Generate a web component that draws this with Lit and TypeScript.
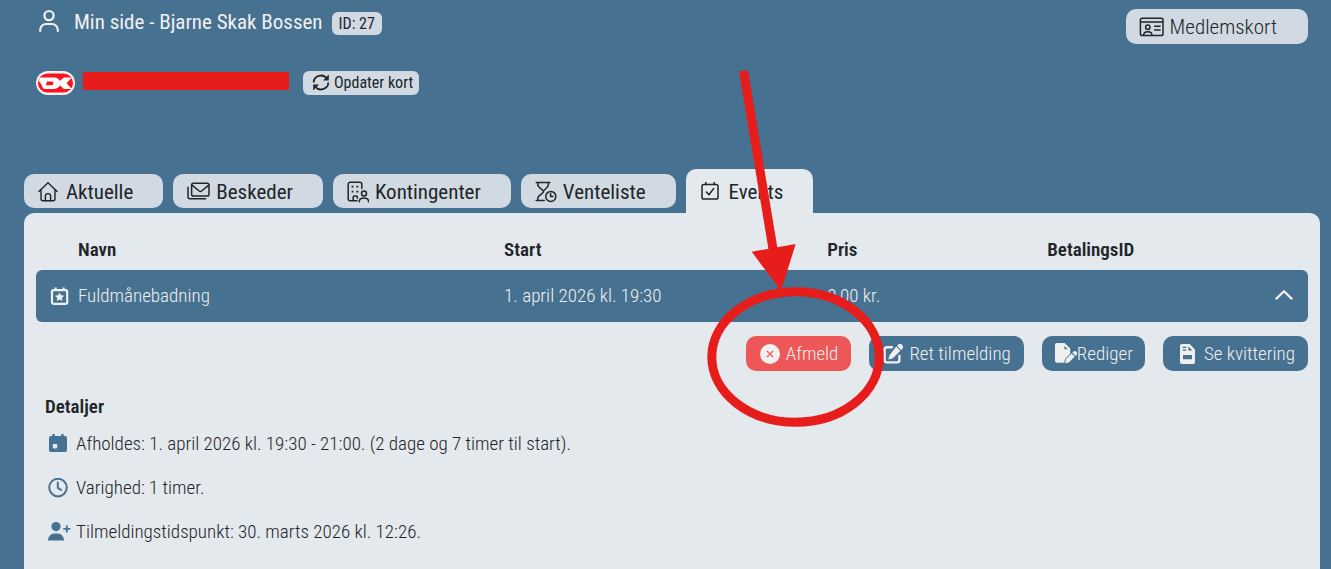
import { LitElement, html, css, svg, SVGTemplateResult } from "lit";
import { customElement, property, state } from "lit/decorators.js";

type Glyph = { w: number; h: number; body: SVGTemplateResult };

const glyphs: Record<string, Glyph> = {
  user: {
    w: 22, h: 26,
    body: svg`<g fill="none" stroke="currentColor" stroke-width="2.200" stroke-linecap="round"><circle cx="11" cy="6.600" r="4.600"/><path d="M2.200 22v-1a6 6 0 0 1 6-6h5.600a6 6 0 0 1 6 6v1"/></g>`,
  },
  card: {
    w: 26, h: 20,
    body: svg`<g fill="none" stroke="currentColor" stroke-width="1.500"><rect x="1.400" y="1.200" width="22.600" height="17.400" rx="1.800"/><path d="M1.400 5H24M15.100 9.200h6.500M15.100 13h6.500"/><circle cx="8.800" cy="10.200" r="2.200"/><path d="M4.600 18.400c0-2.400 1.600-3.600 4.200-3.600s4.200 1.200 4.200 3.600"/></g>`,
  },
  refresh: {
    w: 18, h: 18,
    body: svg`<g fill="none" stroke="currentColor" stroke-width="1.800"><path d="M1.700 8.400A7.200 6.800 0 0 1 15 4.800M16.300 8.600A7.200 6.800 0 0 1 3 12.200"/></g><path d="M16.800.4v6h-5.800l2-2 1.600-.8.800-1.800zM1.200 16.600v-6H7l-2 2-1.600.8-.8 1.800z" fill="currentColor"/>`,
  },
  home: {
    w: 22, h: 20,
    body: svg`<g fill="none" stroke="currentColor" stroke-width="1.400" stroke-linecap="round" stroke-linejoin="round"><path d="M.9 9.400 10 .8l9.100 8.600"/><path d="M3 7.800v9c0 1.200.8 2 2 2h10c1.200 0 2-.8 2-2v-9"/><path d="M7.400 18.800v-4.600a2.600 2.600 0 0 1 5.200 0v4.600"/></g>`,
  },
  mail: {
    w: 23, h: 20,
    body: svg`<g fill="none" stroke="currentColor" stroke-width="1.500" stroke-linecap="round" stroke-linejoin="round"><rect x="4.600" y="1.200" width="17.400" height="12.800" rx="1.800"/><path d="m5 3.200 7.200 5.800c.8.600 1.600.6 2.400 0l7.200-5.800M1 5.200v9.600c0 1.200.8 2 2 2h15.600"/></g>`,
  },
  building: {
    w: 22, h: 22,
    body: svg`<g fill="none" stroke="currentColor" stroke-width="1.500" stroke-linecap="round" stroke-linejoin="round"><path d="M10 19.800H3.200a2 2 0 0 1-2-2V3.200a2 2 0 0 1 2-2h9.600a2 2 0 0 1 2 2v4.400"/><path d="M6.200 19.600v-3.400c0-.8.500-1.200 1.200-1.200h1.800c.7 0 1.200.4 1.200 1.200v1"/><circle cx="17" cy="12.600" r="2.500"/><path d="M12.200 20.800c0-2.600 1.800-3.800 4.800-3.800s4.600 1.200 4.600 3.800"/></g><path d="M4.600 4.800h1.900v1.700H4.600zM9.400 4.800h1.900v1.700H9.400zM4.600 9.700h1.900v1.700H4.600zM9.400 9.700h1.900v1.700H9.400z" fill="currentColor"/>`,
  },
  hourglass: {
    w: 22, h: 22,
    body: svg`<g fill="none" stroke="currentColor" stroke-width="1.500" stroke-linecap="round" stroke-linejoin="round"><path d="M1.200 1.400h13.600M1.200 19.600h8M2.800 1.400v2.200c0 3.800 5.800 4.800 5.800 7s-5.800 3.200-5.800 7v2M13.400 1.400v2.200c0 3-3.800 4.500-4.800 6.400"/><circle cx="15.800" cy="15.400" r="5"/><path d="M15.600 12.600v3H18"/></g>`,
  },
  calendarCheck: {
    w: 20, h: 20,
    body: svg`<g fill="none" stroke="currentColor" stroke-width="1.500" stroke-linecap="round" stroke-linejoin="round"><rect x="2" y="2.400" width="16" height="14.600" rx="1.800"/><path d="M5.800.6v2M14.200.6v2M6.400 10l2.600 2.800 4.600-6.200"/></g>`,
  },
  calendarStar: {
    w: 19, h: 19,
    body: svg`<g fill="none" stroke="currentColor" stroke-width="2.200"><rect x="2" y="3.200" width="15.200" height="13.600" rx="1.600"/><path d="M5.600.4v3M13.600.4v3"/></g><path d="m9.600 5.400 1.400 2.900 3.200.4-2.300 2.200.6 3.200-2.900-1.600-2.900 1.600.6-3.200L5 8.700l3.200-.4z" fill="currentColor"/>`,
  },
  chevron: {
    w: 18, h: 12,
    body: svg`<path d="M1.400 8.600 9 1.200l7.600 7.400" fill="none" stroke="currentColor" stroke-width="2.200" stroke-linecap="round" stroke-linejoin="round"/>`,
  },
  cancel: {
    w: 20, h: 20,
    body: svg`<circle cx="10" cy="10" r="10" fill="currentColor"/><path d="m7 7 6 6m0-6-6 6" stroke="#ed5758" stroke-width="1.200"/>`,
  },
  edit: {
    w: 20, h: 20,
    body: svg`<path d="M9 3.200H4A2.400 2.400 0 0 0 1.600 5.600V16A2.400 2.400 0 0 0 4 18.400h10a2.400 2.400 0 0 0 2.400-2.400v-4" fill="none" stroke="currentColor" stroke-width="2.400" stroke-linecap="round"/><path d="m13.200 2.600 4.200 4.200-6.800 6.800c-.4.400-.8.600-1.300.8l-4 1.200 1.200-4c.2-.5.400-.9.800-1.300zM14 1.800l.9-.9a2.600 2.600 0 0 1 4.200 4.200l-.9.900z" fill="currentColor"/>`,
  },
  filePen: {
    w: 22, h: 21,
    body: svg`<path d="M2 0h7.600l5.600 5.600v5.200l-5 5-1 4H2a2 2 0 0 1-2-2V2a2 2 0 0 1 2-2z" fill="currentColor"/><path d="M9.400 3v3.200h3.400z" fill="#477191"/><path d="m16.600 10.400 3.200 3.200-5.700 5.700-4 1.300.9-4.500zM17.400 9.600l.9-.8a2.200 2.200 0 0 1 3.100 3.200l-.8.900z" fill="currentColor"/>`,
  },
  receipt: {
    w: 20, h: 20,
    body: svg`<path d="M4 0h7.600L17 5.400V18a2 2 0 0 1-2 2H4a2 2 0 0 1-2-2V2a2 2 0 0 1 2-2z" fill="currentColor"/><path d="M4.600 2.800h3.600v1.200H4.600zM4.600 5.600h3.600v1.200H4.600zM10.400 2.600v4h4zM5 11h9v4.200H5z" fill="#477191"/>`,
  },
  calendarDay: {
    w: 20, h: 20,
    body: svg`<path d="M4.400 0h2.400v2h6.400V0h2.400v2H17a2 2 0 0 1 2 2v12a2 2 0 0 1-2 2H3a2 2 0 0 1-2-2V4a2 2 0 0 1 2-2h1.400z" fill="currentColor"/><rect x="4.800" y="10" width="4.400" height="4.400" rx=".8" fill="#e4e9ed"/>`,
  },
  clock: {
    w: 20, h: 20,
    body: svg`<g fill="none" stroke="currentColor" stroke-width="2" stroke-linecap="round" stroke-linejoin="round"><circle cx="10" cy="9.600" r="8.800"/><path d="M9.800 4.600v5.200l3.400 2.200"/></g>`,
  },
  userPlus: {
    w: 23, h: 20,
    body: svg`<circle cx="8" cy="4.600" r="4.600" fill="currentColor"/><path d="M0 18.600c0-4.200 3-7 6.400-7h3.200c3.400 0 6.400 2.800 6.400 7z" fill="currentColor"/><path d="M18.800 3.400v7M15.300 6.900h7" stroke="currentColor" stroke-width="1.800"/>`,
  },
};

@customElement("ui-icon")
export class UiIcon extends LitElement {
  @property() name = "user";
  static styles = css`
    :host { display: inline-flex; flex: none; }
    svg { display: block; }
  `;
  render() {
    const g = glyphs[this.name];
    return html`<svg width=${g.w} height=${g.h} viewBox="0 0 ${g.w} ${g.h}" aria-hidden="true">${g.body}</svg>`;
  }
}

@customElement("app-root")
export class AppRoot extends LitElement {
  @state() private active = "Events";

  private tabs = [
    { label: "Aktuelle", icon: "home" },
    { label: "Beskeder", icon: "mail" },
    { label: "Kontingenter", icon: "building" },
    { label: "Venteliste", icon: "hourglass" },
    { label: "Events", icon: "calendarCheck" },
  ];

  private actions = [
    { label: "Afmeld", icon: "cancel", kind: "danger" },
    { label: "Ret tilmelding", icon: "edit", kind: "" },
    { label: "Rediger", icon: "filePen", kind: "tight" },
    { label: "Se kvittering", icon: "receipt", kind: "" },
  ];

  private details = [
    { icon: "calendarDay", text: "Afholdes: 1. april 2026 kl. 19:30 - 21:00. (2 dage og 7 timer til start)." },
    { icon: "clock", text: "Varighed: 1 timer." },
    { icon: "userPlus", text: "Tilmeldingstidspunkt: 30. marts 2026 kl. 12:26." },
  ];

  static styles = css`
    :host {
      display: flex;
      flex-direction: column;
      position: relative;
      box-sizing: border-box;
      min-height: 100vh;
      overflow: hidden;
      background: #477191;
      color: #212529;
      font: 300 19px/24px "Roboto Condensed", "Liberation Sans Narrow", Roboto, sans-serif;
    }
    button { font: inherit; color: inherit; border: 0; margin: 0; cursor: pointer; display: flex; align-items: center; }
    .top { display: flex; justify-content: space-between; align-items: flex-start; padding: 9px 23px 0 36px; }
    .who { display: flex; flex-direction: column; gap: 36px; }
    .line { display: flex; align-items: center; }
    .title { color: #f0f0f0; height: 26px; }
    h1 { font-size: 21px; line-height: 26px; font-weight: 400; margin: 0 9px 0 14px; }
    .title ui-icon { margin-left: 2px; }
    .badge { background: #d1dae2; color: #212529; border-radius: 6px; font-size: 16px; line-height: 23px; padding: 0 7px; font-weight: 400; align-self: flex-end; }
    .redacted { width: 206px; height: 18px; background: #e71d1c; margin: 1px 14px 0 8px; align-self: flex-start; }
    .update { background: #d1dae2; border-radius: 6px; height: 24px; padding: 0 6px 0 9px; gap: 4px; font-size: 16px; font-weight: 400; }
    .member { background: #d1dae2; border-radius: 10px; height: 35px; padding: 0 31px 0 13px; gap: 5px; font-size: 21px; }
    .tabs { display: flex; align-items: flex-end; gap: 10px; padding: 0 24px; margin-top: 74px; }
    .tab { background: #d1dae2; border-radius: 10px; height: 34px; padding: 1px 30px 0 14px; margin-bottom: 5px; gap: 6px; font-size: 21px; font-weight: 400; }
    .tab.active { background: #e4e9ed; border-radius: 10px 10px 0 0; height: 44px; margin-bottom: 0; gap: 9px; }
    .panel { flex: 1; background: #e4e9ed; border-radius: 10px 10px 0 0; margin: 0 11px 0 24px; padding: 16px 12px; }
    table { width: 100%; border-collapse: separate; border-spacing: 0; table-layout: fixed; }
    th, td { text-align: left; padding: 0; }
    th { font-weight: 600; height: 41px; vertical-align: middle; }
    td { background: #477191; color: #f0f0f0; height: 52px; }
    td ui-icon { vertical-align: middle; }
    td:first-child { border-radius: 6px 0 0 6px; padding-left: 14px; }
    td:last-child { border-radius: 0 6px 6px 0; }
    .c-icon { width: 42px; }
    .c-name { width: 33.5%; }
    .c-start { width: 25.4%; }
    .c-price { width: 17.3%; }
    .toggle { background: none; color: #f0f0f0; padding: 0; margin: 0 15px 0 auto; }
    .actions { display: flex; justify-content: flex-end; flex-wrap: wrap; gap: 18px; margin-top: 14px; }
    .action { background: #477191; color: #f0f0f0; border-radius: 10px; height: 35px; padding: 0 13px 0 14px; gap: 6px; }
    .action:last-child { padding-left: 15px; }
    .action.danger { background: #ed5758; }
    .action.tight { gap: 0; padding: 0 12px 0 13px; }
    h2 { font-size: 19px; line-height: 24px; font-weight: 600; margin: 24px 0 13px 9px; }
    ul { list-style: none; margin: 0 0 0 12px; padding: 0; display: flex; flex-direction: column; gap: 20px; }
    li { display: flex; align-items: center; gap: 5px; }
    .lead { width: 23px; color: #477191; display: flex; justify-content: flex-start; }
    .mark { position: absolute; left: 0; top: 0; pointer-events: none; }
  `;

  render() {
    return html`
      <header class="top">
        <div class="who">
          <div class="line title"><ui-icon name="user"></ui-icon><h1>Min side - Bjarne Skak Bossen</h1><span class="badge">ID: 27</span></div>
          <div class="line">
            <svg width="39" height="24" viewBox="0 0 39 24" role="img" aria-label="Dansk Kano og Kajak">
              <rect width="39" height="24" rx="12" fill="#f3efef"/>
              <rect x="2" y="2.500" width="35" height="19" rx="9.500" fill="#fb1420"/>
              <path d="M3.500 6.500H18c3.500 0 5 2.200 6 3.200l4-3.200h8l-5.500 5.700 5.500 5.800h-8l-4-3.400c-1 1.200-2.500 3.400-6 3.400H9c-2 0-2.500-1.500-3-3.500L3 10z" fill="#fff"/>
              <path d="M11 10.400h4.400c1.400 0 2.100.8 2.100 1.900s-.7 1.900-2.100 1.900H9.800z" fill="#fb1420"/>
            </svg>
            <span class="redacted"></span>
            <button class="update"><ui-icon name="refresh"></ui-icon>Opdater kort</button>
          </div>
        </div>
        <button class="member"><ui-icon name="card"></ui-icon>Medlemskort</button>
      </header>
      <nav class="tabs">
        ${this.tabs.map((t) => html`<button class="tab ${t.label === this.active ? "active" : ""}" @click=${() => (this.active = t.label)}><ui-icon name=${t.icon}></ui-icon>${t.label}</button>`)}
      </nav>
      <main class="panel">
        <table>
          <thead>
            <tr><th class="c-icon"></th><th class="c-name">Navn</th><th class="c-start">Start</th><th class="c-price">Pris</th><th>BetalingsID</th></tr>
          </thead>
          <tbody>
            <tr>
              <td><ui-icon name="calendarStar"></ui-icon></td>
              <td>Fuldmånebadning</td><td>1. april 2026 kl. 19:30</td><td>0,00 kr.</td>
              <td><button class="toggle" aria-label="Skjul detaljer"><ui-icon name="chevron"></ui-icon></button></td>
            </tr>
          </tbody>
        </table>
        <div class="actions">
          ${this.actions.map((a) => html`<button class="action ${a.kind}"><ui-icon name=${a.icon}></ui-icon>${a.label}</button>`)}
        </div>
        <h2>Detaljer</h2>
        <ul>
          ${this.details.map((d) => html`<li><span class="lead"><ui-icon name=${d.icon}></ui-icon></span>${d.text}</li>`)}
        </ul>
      </main>
      <svg class="mark" width="900" height="440" viewBox="0 0 900 440" aria-hidden="true">
        <path d="m743.500 70.700 29.800 180" stroke="#e71d1c" stroke-width="9"/>
        <path d="m751.700 251.700 44-7.700-14.700 47z" fill="#e71d1c"/>
        <ellipse cx="795.500" cy="357" rx="83.700" ry="65.200" fill="none" stroke="#e71d1c" stroke-width="9"/>
      </svg>
    `;
  }
}
